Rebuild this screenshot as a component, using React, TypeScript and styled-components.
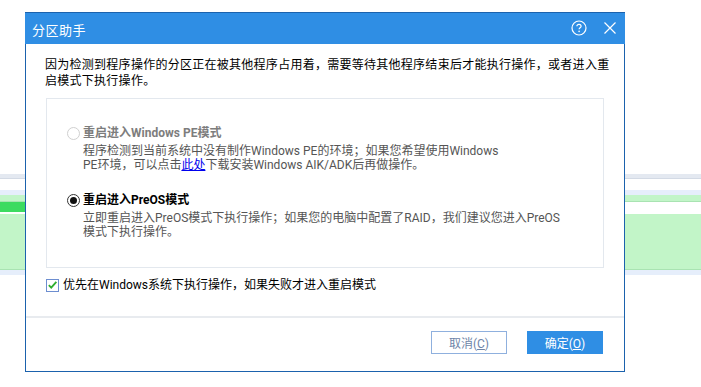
import React, { useState } from "react";
import styled, { createGlobalStyle } from "styled-components";

/** ===========================================================================
 * Partition assistant: restart-mode dialog over the main window
 * ============================================================================
 */

const GlobalStyle = createGlobalStyle`
  html, body {
    margin: 0;
    padding: 0;
    background: #ffffff;
  }
  body {
    font-family: "Noto Sans CJK SC", "Liberation Sans", sans-serif;
    font-size: 12px;
    color: #000;
  }
`;

// Latin runs render narrower than the CJK font's own Latin glyphs
const MIXED_FONT = `Roboto, "Noto Sans CJK SC", sans-serif`;

type StripeKind = "gap" | "grey" | "blue" | "green" | "bright" | "white";

const LEFT_STRIPES: [StripeKind, number][] = [
  ["gap", 174],
  ["grey", 5],
  ["gap", 11],
  ["blue", 5],
  ["green", 7],
  ["bright", 10],
  ["white", 2],
  ["green", 56],
  ["blue", 5],
];

const RIGHT_STRIPES: [StripeKind, number][] = [
  ["gap", 174],
  ["grey", 5],
  ["gap", 11],
  ["blue", 5],
  ["green", 7],
  ["white", 12],
  ["green", 56],
  ["blue", 5],
];

const App: React.FC = () => {
  const [mode, setMode] = useState<"pe" | "preos">("preos");
  const [preferWindows, setPreferWindows] = useState(true);

  return (
    <Screen>
      <GlobalStyle />
      <Backdrop>
        <Pane>
          {LEFT_STRIPES.map(([kind, h], i) => (
            <Stripe key={i} $kind={kind} $h={h} />
          ))}
        </Pane>
        <Pane>
          {RIGHT_STRIPES.map(([kind, h], i) => (
            <Stripe key={i} $kind={kind} $h={h} />
          ))}
        </Pane>
      </Backdrop>

      <Dialog>
        <TitleBar>
          <Title>分区助手</Title>
          <TitleButtons>
            <IconButton aria-label="help">
              <svg width="16" height="16" viewBox="0 0 16 16">
                <circle cx="8" cy="8" r="7" fill="none" stroke="#fff" strokeWidth="1.2" />
                <path
                  d="M5.9 6.3c0-1.2.9-2 2.1-2s2.1.8 2.1 1.9c0 1.5-2 1.6-2 3.1"
                  fill="none"
                  stroke="#fff"
                  strokeWidth="1.2"
                />
                <circle cx="8.1" cy="11.4" r="0.8" fill="#fff" />
              </svg>
            </IconButton>
            <IconButton aria-label="close">
              <svg width="14" height="14" viewBox="0 0 14 14">
                <path d="M1.5 1.5l11 11M12.5 1.5l-11 11" stroke="#fff" strokeWidth="1.2" />
              </svg>
            </IconButton>
          </TitleButtons>
        </TitleBar>

        <Body>
          <Message>
            因为检测到程序操作的分区正在被其他程序占用着，需要等待其他程序结束后才能执行操作，或者进入重
            <br />
            启模式下执行操作。
          </Message>

          <OptionsPanel>
            <Option>
              <OptionHead>
                <Radio $checked={mode === "pe"} $disabled />
                <OptionLabel $disabled>重启进入Windows PE模式</OptionLabel>
              </OptionHead>
              <OptionDesc>
                程序检测到当前系统中没有制作Windows PE的环境；如果您希望使用Windows
                <br />
                PE环境，可以点击<Link href="#">此处</Link>下载安装Windows AIK/ADK后再做操作。
              </OptionDesc>
            </Option>

            <Option onClick={() => setMode("preos")}>
              <OptionHead>
                <Radio $checked={mode === "preos"} />
                <OptionLabel>重启进入PreOS模式</OptionLabel>
              </OptionHead>
              <OptionDesc>
                立即重启进入PreOS模式下执行操作；如果您的电脑中配置了RAID，我们建议您进入PreOS
                <br />
                模式下执行操作。
              </OptionDesc>
            </Option>
          </OptionsPanel>

          <CheckRow onClick={() => setPreferWindows((v) => !v)}>
            <CheckBox>
              {preferWindows && (
                <svg width="12" height="12" viewBox="0 0 12 12">
                  <path d="M2 6.2l2.6 2.6L10.2 2.6" fill="none" stroke="#2fae2f" strokeWidth="2" />
                </svg>
              )}
            </CheckBox>
            <CheckLabel>优先在Windows系统下执行操作，如果失败才进入重启模式</CheckLabel>
          </CheckRow>
        </Body>

        <Footer>
          <Button $variant="secondary">取消(<u>C</u>)</Button>
          <Button $variant="primary">确定(<u>O</u>)</Button>
        </Footer>
      </Dialog>
    </Screen>
  );
};

/** ===========================================================================
 * Styled Components
 * ============================================================================
 */

const Screen = styled.div`
  position: relative;
  width: 701px;
  height: 387px;
  overflow: hidden;
  background: #fff;
`;

const Backdrop = styled.div`
  display: flex;
  width: 100%;
  height: 100%;
`;

const Pane = styled.div`
  flex: 1;
  display: flex;
  flex-direction: column;
`;

const STRIPE_COLORS: Record<StripeKind, string> = {
  gap: "transparent",
  grey: "#e4e9f1",
  blue: "#e6eefb",
  green: "#c2f5c8",
  bright: "#3cdb60",
  white: "#ffffff",
};

const Stripe = styled.div<{ $kind: StripeKind; $h: number }>`
  height: ${(p) => p.$h}px;
  flex-shrink: 0;
  box-sizing: border-box;
  background: ${(p) => STRIPE_COLORS[p.$kind]};
  border-bottom: ${(p) =>
    p.$kind === "grey"
      ? "1px solid #d3dae5"
      : p.$kind === "green"
        ? "1px solid #a9e3b2"
        : "none"};
`;

const Dialog = styled.div`
  position: absolute;
  left: 25px;
  top: 12px;
  width: 600px;
  height: 360px;
  box-sizing: border-box;
  border: 1px solid #1b62ad;
  border-top: none;
  background: #fff;
  display: flex;
  flex-direction: column;
`;

const TitleBar = styled.div`
  height: 32px;
  flex-shrink: 0;
  margin: 0 -1px;
  background: #2f8ee4;
  border-top: 1px solid #1b62ad;
  box-sizing: border-box;
  display: flex;
  align-items: center;
  justify-content: space-between;
  padding: 0 7px 0 7px;
`;

const Title = styled.div`
  color: #fff;
  font-size: 13px;
  letter-spacing: 0.5px;
  padding-top: 1px;
`;

const TitleButtons = styled.div`
  display: flex;
  align-items: center;
  gap: 15px;
  margin-top: -1px;
`;

const IconButton = styled.div`
  width: 16px;
  height: 16px;
  display: flex;
  align-items: center;
  justify-content: center;
`;

const Body = styled.div`
  flex: 1;
  display: flex;
  flex-direction: column;
  padding: 12px 20px 0 20px;
  border-bottom: 2px solid #e8ebef;
`;

const Message = styled.div`
  font-size: 12px;
  line-height: 16px;
  letter-spacing: 0.27px;
  white-space: nowrap;
  margin-left: -1px;
`;

const OptionsPanel = styled.div`
  margin-top: 10px;
  height: 170px;
  flex-shrink: 0;
  box-sizing: border-box;
  border: 1px solid #e3e8ee;
  padding: 26px 0 0 20px;
  display: flex;
  flex-direction: column;
  gap: 20px;
`;

const Option = styled.div`
  display: flex;
  flex-direction: column;
  gap: 3px;
`;

const OptionHead = styled.div`
  display: flex;
  align-items: center;
  gap: 3px;
`;

const Radio = styled.span<{ $checked?: boolean; $disabled?: boolean }>`
  width: 13px;
  height: 13px;
  box-sizing: border-box;
  border-radius: 50%;
  border: 1px solid ${(p) => (p.$disabled ? "#d0d0d0" : "#333")};
  background: #fff;
  position: relative;

  &::after {
    content: "";
    display: ${(p) => (p.$checked ? "block" : "none")};
    position: absolute;
    left: 2px;
    top: 2px;
    width: 7px;
    height: 7px;
    border-radius: 50%;
    background: #111;
  }
`;

const OptionLabel = styled.span<{ $disabled?: boolean }>`
  font-family: ${MIXED_FONT};
  font-weight: bold;
  font-size: 12px;
  line-height: 16px;
  color: ${(p) => (p.$disabled ? "#7d7d7d" : "#000")};
`;

const OptionDesc = styled.div`
  padding-left: 16px;
  font-family: ${MIXED_FONT};
  font-size: 12px;
  line-height: 14px;
  color: #555;
  white-space: nowrap;
`;

const Link = styled.a`
  color: #0000ee;
  text-decoration: underline;
`;

const CheckRow = styled.div`
  margin-top: 9px;
  display: flex;
  align-items: center;
  gap: 4px;
`;

const CheckBox = styled.span`
  width: 13px;
  height: 13px;
  box-sizing: border-box;
  border: 1px solid #6d8ed0;
  background: #fff;
  display: flex;
  align-items: center;
  justify-content: center;
`;

const CheckLabel = styled.span`
  font-family: ${MIXED_FONT};
  font-size: 12px;
  line-height: 16px;
`;

const Footer = styled.div`
  height: 53px;
  flex-shrink: 0;
  box-sizing: border-box;
  display: flex;
  justify-content: flex-end;
  align-items: flex-start;
  gap: 20px;
  padding: 13px 21px 0 0;
`;

const Button = styled.button<{ $variant: "primary" | "secondary" }>`
  width: 76px;
  height: 23px;
  box-sizing: border-box;
  font-family: ${MIXED_FONT};
  font-size: 12px;
  padding: 0;
  cursor: pointer;
  border: 1px solid ${(p) => (p.$variant === "primary" ? "#2f8ee4" : "#8fb0de")};
  background: ${(p) => (p.$variant === "primary" ? "#2f8ee4" : "#fff")};
  color: ${(p) => (p.$variant === "primary" ? "#fff" : "#6e85a8")};

  u {
    text-decoration: underline;
  }
`;

export default App;
